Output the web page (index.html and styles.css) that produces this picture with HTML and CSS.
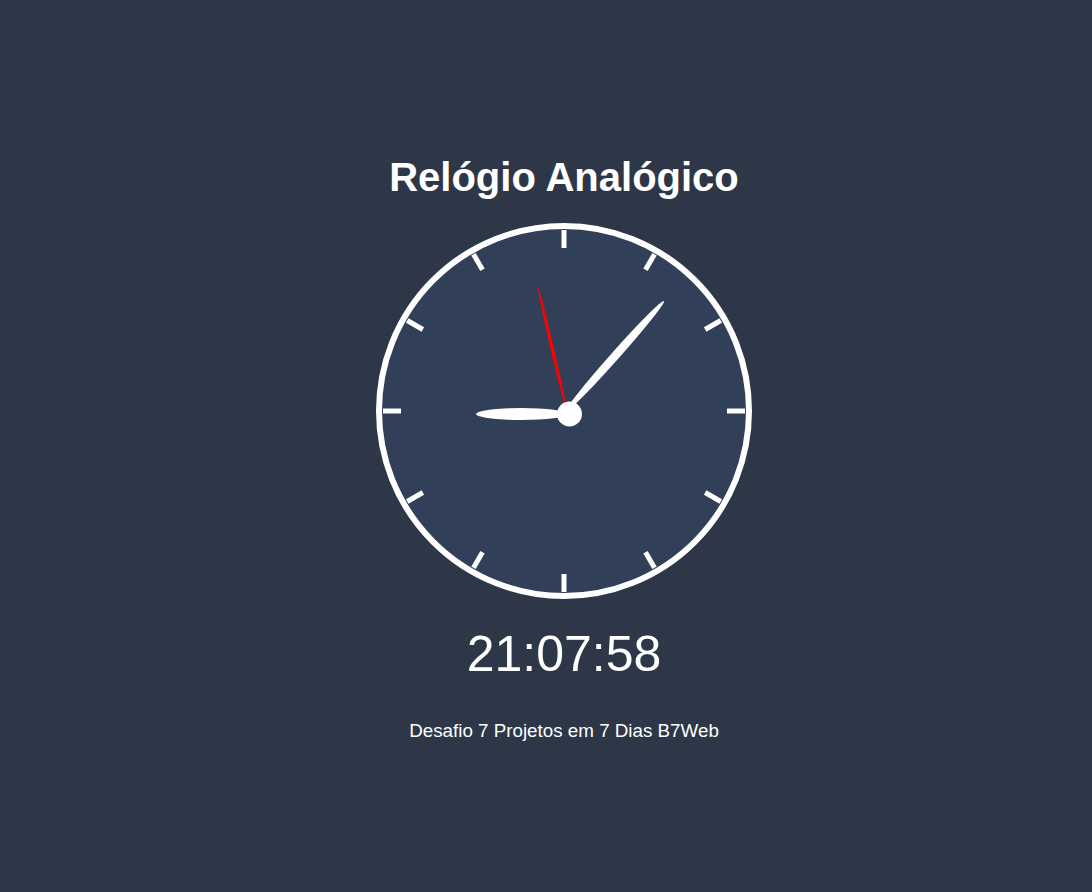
FILE: index.html
```html
<!DOCTYPE html>
<html lang="pt-BR">
<head>
<meta charset="utf-8">
<title>Relógio Analógico</title>
<link rel="stylesheet" href="styles.css">
</head>
<body>
<main class="page">
  <h1 class="title">Relógio Analógico</h1>
  <div class="clock">
    <svg class="clock-svg" width="376" height="376" viewBox="0 0 376 376">
      <circle class="face" cx="188" cy="188" r="185"/>
      <g class="ticks">
        <rect x="185.5" y="7" width="5" height="18" transform="rotate(0 188 188)"/>
        <rect x="185.5" y="7" width="5" height="18" transform="rotate(30 188 188)"/>
        <rect x="185.5" y="7" width="5" height="18" transform="rotate(60 188 188)"/>
        <rect x="185.5" y="7" width="5" height="18" transform="rotate(90 188 188)"/>
        <rect x="185.5" y="7" width="5" height="18" transform="rotate(120 188 188)"/>
        <rect x="185.5" y="7" width="5" height="18" transform="rotate(150 188 188)"/>
        <rect x="185.5" y="7" width="5" height="18" transform="rotate(180 188 188)"/>
        <rect x="185.5" y="7" width="5" height="18" transform="rotate(210 188 188)"/>
        <rect x="185.5" y="7" width="5" height="18" transform="rotate(240 188 188)"/>
        <rect x="185.5" y="7" width="5" height="18" transform="rotate(270 188 188)"/>
        <rect x="185.5" y="7" width="5" height="18" transform="rotate(300 188 188)"/>
        <rect x="185.5" y="7" width="5" height="18" transform="rotate(330 188 188)"/>
      </g>
      <ellipse class="hand-hour" cx="145.5" cy="191" rx="45.5" ry="6"/>
      <ellipse class="hand-second" cx="176" cy="124.5" rx="62.1" ry="1.7" transform="rotate(77 176 124.5)"/>
      <ellipse class="hand-minute" cx="239" cy="133" rx="73.7" ry="4.2" transform="rotate(-48.3 239 133)"/>
      <circle class="center-dot" cx="193.5" cy="191" r="12.5"/>
    </svg>
  </div>
  <div class="digital">21:07:58</div>
  <p class="footer">Desafio 7 Projetos em 7 Dias B7Web</p>
</main>
</body>
</html>
```

FILE: styles.css
```css
html, body {
  margin: 0;
  padding: 0;
}

body {
  background: #2d3748;
  color: #ffffff;
  font-family: "Liberation Sans", Arial, sans-serif;
  min-height: 100vh;
}

.page {
  display: flex;
  flex-direction: column;
  align-items: center;
  padding-top: 155px;
  padding-left: 36px;
}

.title {
  margin: 0;
  font-size: 40px;
  font-weight: bold;
  line-height: normal;
}

.clock {
  margin-top: 23px;
  width: 376px;
  height: 376px;
}

.clock-svg {
  display: block;
}

.face {
  fill: #323f58;
  stroke: #ffffff;
  stroke-width: 6;
}

.ticks rect {
  fill: #ffffff;
}

.hand-hour,
.hand-minute,
.center-dot {
  fill: #ffffff;
}

.hand-second {
  fill: #ff0000;
}

.digital {
  margin-top: 26px;
  font-size: 50px;
  line-height: normal;
}

.footer {
  margin: 37px 0 0;
  font-size: 18.8px;
  line-height: normal;
}
```
